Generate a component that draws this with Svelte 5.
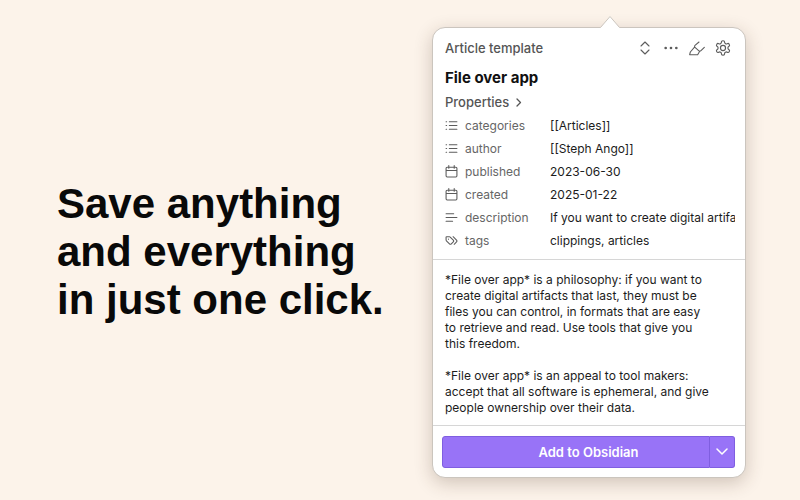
<script lang="ts">
	type Property = { name: string; icon: 'list' | 'calendar' | 'text' | 'tags'; value: string };

	let properties = $state<Property[]>([
		{ name: 'categories', icon: 'list', value: '[[Articles]]' },
		{ name: 'author', icon: 'list', value: '[[Steph Ango]]' },
		{ name: 'published', icon: 'calendar', value: '2023-06-30' },
		{ name: 'created', icon: 'calendar', value: '2025-01-22' },
		{ name: 'description', icon: 'text', value: 'If you want to create digital artifa' },
		{ name: 'tags', icon: 'tags', value: 'clippings, articles' }
	]);

	const icons = {
		list: 'M8 5h14M8 12h14M8 19h14M2 5h1M2 12h1M2 19h1',
		calendar: 'M7 1v5M17 1v5M4 4h16a2 2 0 0 1 2 2v14a2 2 0 0 1-2 2H4a2 2 0 0 1-2-2V6a2 2 0 0 1 2-2zM2 10h20',
		text: 'M2 5h14M2 12h20M2 19h12',
		tags: 'm15 5 6.3 6.3a2.4 2.4 0 0 1 0 3.4L17 19M9.6 5.6A2 2 0 0 0 8.2 5H3a1 1 0 0 0-1 1v5.2a2 2 0 0 0 .6 1.4l5.7 5.7a2.4 2.4 0 0 0 3.4 0l3.6-3.6a2.4 2.4 0 0 0 0-3.4zM6.5 9.5h.01'
	};

	let template = $state('Article template');
	let title = $state('File over app');
	let open = $state(true);
	let content = $state(
		[
			'*File over app* is a philosophy: if you want to',
			'create digital artifacts that last, they must be',
			'files you can control, in formats that are easy',
			'to retrieve and read. Use tools that give you',
			'this freedom.',
			'',
			'*File over app* is an appeal to tool makers:',
			'accept that all software is ephemeral, and give',
			'people ownership over their data.'
		].join('\n')
	);
</script>

<main class="promo">
	<h1>Save anything<br />and everything<br />in just one click.</h1>

	<form class="clipper" onsubmit={(e) => e.preventDefault()}>
		<svg class="pointer" viewBox="0 0 22 13" aria-hidden="true">
			<path d="M0 13 2 12 11 1l9 11 2 1z" fill="#fff" />
			<path d="M0 12.5h1.5L11 1.5l9.5 11H22" fill="none" stroke="#cbc5be" />
		</svg>

		<section class="top">
			<div class="toolbar">
				<div class="template">
					<select aria-label="Template" bind:value={template}>
						<option>Article template</option>
						<option>Default</option>
					</select>
					<svg class="icon" viewBox="0 0 24 24" aria-hidden="true"><path d="m6 9 6-6 6 6M6 15l6 6 6-6" /></svg>
				</div>
				<button type="button" class="tool" aria-label="More">
					<svg class="icon" viewBox="0 0 24 24"><path class="dots" d="M4 12h.01M12 12h.01M20 12h.01" /></svg>
				</button>
				<button type="button" class="tool" aria-label="Highlight">
					<svg class="icon" viewBox="0 0 24 24"><path d="m8 11-6 7-1 4h12l3-5M23 11l-5 5a2.5 2.5 0 0 1-3.5 0L9 11a2 2 0 0 1 0-3l6-5" /></svg>
				</button>
				<button type="button" class="tool" aria-label="Settings">
					<svg class="icon" viewBox="1 1 22 22">
						<path d="M12.2 2h-.4a2 2 0 0 0-2 2v.2a2 2 0 0 1-1 1.7l-.4.3a2 2 0 0 1-2 0l-.2-.1a2 2 0 0 0-2.7.7l-.2.4a2 2 0 0 0 .7 2.7l.2.1a2 2 0 0 1 1 1.7v.5a2 2 0 0 1-1 1.7l-.2.1a2 2 0 0 0-.7 2.7l.2.4a2 2 0 0 0 2.7.7l.2-.1a2 2 0 0 1 2 0l.4.3a2 2 0 0 1 1 1.7v.2a2 2 0 0 0 2 2h.4a2 2 0 0 0 2-2v-.2a2 2 0 0 1 1-1.7l.4-.3a2 2 0 0 1 2 0l.2.1a2 2 0 0 0 2.7-.7l.2-.4a2 2 0 0 0-.7-2.7l-.2-.1a2 2 0 0 1-1-1.7v-.5a2 2 0 0 1 1-1.7l.2-.1a2 2 0 0 0 .7-2.7l-.2-.4a2 2 0 0 0-2.7-.7l-.2.1a2 2 0 0 1-2 0l-.4-.3a2 2 0 0 1-1-1.7V4a2 2 0 0 0-2-2z" />
						<circle cx="12" cy="12" r="3.5" />
					</svg>
				</button>
			</div>

			<input class="title" aria-label="Title" bind:value={title} />

			<button type="button" class="toggle" aria-expanded={open} onclick={() => (open = !open)}>
				Properties
				<svg class="caret" viewBox="0 0 8 10" aria-hidden="true"><path d="m2 2 3.5 3.5L2 9" /></svg>
			</button>

			{#if open}
				<div class="properties">
					{#each properties as property}
						<div class="property">
							<svg class="glyph" viewBox="0 0 24 24" aria-hidden="true"><path d={icons[property.icon]} /></svg>
							<label for={property.name}>{property.name}</label>
							<input id={property.name} bind:value={property.value} />
						</div>
					{/each}
				</div>
			{/if}
		</section>

		<textarea aria-label="Note content" rows="9" bind:value={content}></textarea>

		<footer>
			<button class="add">Add to Obsidian</button>
			<button type="button" class="more" aria-label="More ways to save">
				<svg viewBox="0 0 12 8"><path d="m1 1 5 5 5-5" /></svg>
			</button>
		</footer>
	</form>
</main>

<style>
	:global(body) { margin: 0; background: #fcf3ea; }

	.promo {
		box-sizing: border-box;
		min-height: 100vh;
		display: flex;
		align-items: center;
		justify-content: space-between;
		gap: 24px;
		padding: 27px 54px 22px 57px;
		font-family: Inter, "Liberation Sans", sans-serif;
	}

	h1 {
		margin: 0;
		padding-bottom: 2px;
		font: bold 42px/48px "Liberation Sans", Arial, sans-serif;
		color: #090909;
	}

	.clipper {
		position: relative;
		box-sizing: border-box;
		flex: 0 1 314px;
		min-width: 0;
		background: #fff;
		border: 1px solid #cbc5be;
		border-radius: 13px;
		box-shadow: 0 5px 18px rgba(70, 45, 30, 0.24);
	}
	.pointer { position: absolute; left: 166px; top: -13px; width: 22px; height: 13px; }

	button, input, select, textarea {
		font: inherit;
		color: inherit;
		margin: 0;
		padding: 0;
		border: 0;
		background: none;
		outline: none;
	}
	button { cursor: pointer; }
	svg { display: block; }
	path, circle { stroke-linecap: round; stroke-linejoin: round; }

	.top { padding: 8px 10px 7px 12px; border-bottom: 1px solid #d6d6d6; }

	.toolbar { display: flex; align-items: center; gap: 10px; height: 24px; padding-right: 4px; color: #555; }
	.template { flex: 1; display: flex; align-items: center; min-width: 0; }
	select { appearance: none; flex: 1; min-width: 0; font-size: 13px; font-weight: 500; }
	.tool { flex: none; }
	.icon { width: 16px; height: 16px; fill: none; stroke: #5c5c5c; stroke-width: 1.6; }
	.dots { stroke-width: 4; }

	.title {
		display: block;
		width: 100%;
		height: 24px;
		margin-top: 5px;
		font-size: 15px;
		font-weight: 700;
		color: #111;
	}

	.toggle {
		display: flex;
		align-items: center;
		gap: 6px;
		height: 20px;
		margin-top: 3px;
		font-size: 13px;
		font-weight: 500;
		color: #555;
	}
	.caret { width: 8px; height: 10px; fill: none; stroke: #555; stroke-width: 1.3; }

	.properties { margin-top: 2px; font-size: 12px; }
	.property { display: flex; align-items: center; height: 23px; }
	.glyph { flex: none; width: 13px; height: 13px; fill: none; stroke: #5c5c5c; stroke-width: 2; }
	label { flex: 0 0 85px; margin-left: 7px; color: #666; }
	.property input { flex: 1; min-width: 0; color: #1c1c1c; }

	textarea {
		display: block;
		box-sizing: border-box;
		width: 100%;
		padding: 12px 12px 9px;
		border-bottom: 1px solid #d6d6d6;
		resize: none;
		overflow: hidden;
		font-size: 12px;
		line-height: 16px;
		color: #1c1c1c;
	}

	footer { display: flex; padding: 10px 10px 9px 9px; color: #fff; }
	footer button { height: 32px; background: #9873f7; border: 1px solid #7f5ee0; }
	/* left padding balances the arrow button, so the label is centred on the pair */
	.add { flex: 1; padding-left: 25px; border-radius: 3px 0 0 3px; font-size: 13px; font-weight: 600; }
	.more {
		display: flex;
		align-items: center;
		justify-content: center;
		width: 25px;
		border-left: 0;
		border-radius: 0 3px 3px 0;
	}
	.more svg { width: 12px; height: 8px; fill: none; stroke: #fff; stroke-width: 1.5; }
</style>
